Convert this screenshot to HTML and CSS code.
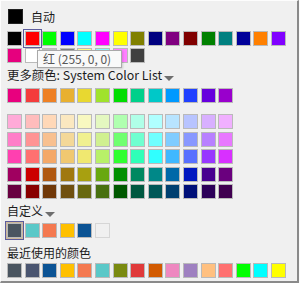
FILE: index.html
```html
<!DOCTYPE html>
<html lang="zh-CN">
<head>
    <meta charset="UTF-8">
    <title>颜色选择</title>
    <link rel="stylesheet" href="styles.css">
</head>
<body>
    <div class="picker">
        <div class="auto">
            <span class="swatch auto-swatch"></span>
            <span class="auto-text">自动</span>
        </div>
        <div class="grid basic" id="basic"></div>
        <div class="label label-more">更多颜色: System Color List<span class="caret"></span></div>
        <div class="grid standard" id="standard"></div>
        <div class="grid tints" id="tints"></div>
        <div class="label label-custom">自定义<span class="caret"></span></div>
        <div class="grid custom" id="custom"></div>
        <div class="label label-recent">最近使用的颜色</div>
        <div class="grid recent" id="recent"></div>

        <div class="tooltip">红 (255, 0, 0)</div>
    </div>

    <script>
        var basic = ['#000000', '#ff0000', '#00ff00', '#0000ff', '#00ffff', '#ff00ff', '#ffff00', '#808000',
                     '#000080', '#800080', '#800000', '#008000', '#008080', '#00009a', '#ff8000', '#8000ff',
                     '#e6007e', '#ffffff', '#c0c0c0', '#808080', '#ffff80', '#80ffff', '#ff80ff', '#404040'];

        var standard = ['#e8007e', '#f43c3c', '#ee8024', '#e8b030', '#e8d830', '#a0e22c', '#00dd00',
                        '#00d08a', '#00c8c8', '#0099ff', '#2040ff', '#6600dd', '#9900cc'];

        var tints = [
            '#ffaad8', '#ffbcbc', '#ffd8b8', '#fbe8c0', '#f8f8c0', '#e4f8c0', '#b0ffb0', '#b0ffe8', '#b0ffff', '#b8e4ff', '#b8c4ff', '#d8b0ff', '#f0b0ff',
            '#ff7ec8', '#ff9494', '#f8c090', '#f4d898', '#f0f090', '#d0f090', '#70ff70', '#70ffd0', '#70ffff', '#80ccff', '#8898ff', '#b880ff', '#e878ff',
            '#ff40b0', '#ff7070', '#f4a868', '#f0c870', '#f0e870', '#b8f068', '#30ff30', '#30ffb8', '#30ffff', '#40b8ff', '#5870ff', '#9838ff', '#d830ff',
            '#a00060', '#cc0000', '#b05810', '#a07810', '#a8a010', '#68a810', '#009000', '#008860', '#008888', '#0068a8', '#0018c0', '#480090', '#6a007e',
            '#680040', '#880000', '#703808', '#705010', '#686810', '#487010', '#005800', '#005840', '#005858', '#004070', '#001078', '#2c0058', '#400050'
        ];

        var custom = ['#4a5560', '#5bc8c8', '#f47950', '#ffc000', '#0b5394', '#f0f0f0'];

        var recent = ['#4a5560', '#4a5570', '#0b5394', '#ffc000', '#f47950', '#5bc8c8', '#7a8a10', '#e03a3a',
                      '#d25a00', '#ee88c0', '#9e80c0', '#ffc080', '#ff7070', '#00ff00', '#00ffff', '#ffff00'];

        function fill(id, colors, selected) {
            var box = document.getElementById(id);
            for (var i = 0; i < colors.length; i++) {
                var cell = document.createElement('span');
                cell.className = 'swatch';
                if (i === selected) {
                    cell.className += ' selected';
                }
                if (colors[i] === '#f0f0f0') {
                    cell.className += ' empty';
                }
                cell.style.background = colors[i];
                box.appendChild(cell);
            }
        }

        fill('basic', basic, 1);
        fill('standard', standard, -1);
        fill('tints', tints, -1);
        fill('custom', custom, 0);
        fill('recent', recent, -1);
    </script>
</body>
</html>
```

FILE: styles.css
```css
body {
    margin: 0;
    background: #fbfbfb;
    font-family: "Noto Sans CJK SC", "Noto Sans", sans-serif;
    font-size: 12px;
    color: #1c1c1c;
}
.picker {
    position: relative;
    width: 290px;
    height: 272px;
    padding: 8px 0 0 6px;
    background: #f0f0f0;
    border-top: 1px solid #fdfdfd;
    border-left: 1px solid #fdfdfd;
    border-right: 2px solid #8a8a8a;
    border-bottom: 2px solid #8a8a8a;
}
.auto {
    display: flex;
    align-items: center;
    height: 15px;
    margin-left: 1px;
}
.auto-text {
    margin-left: 8px;
    line-height: 15px;
}
.grid {
    display: grid;
    grid-template-columns: repeat(16, 15px);
    gap: 2.6px;
}
.standard,
.tints {
    grid-template-columns: repeat(13, 15px);
}
.basic {
    margin-top: 6.5px;
    row-gap: 2.5px;
}
.swatch {
    display: block;
    width: 15px;
    height: 15px;
    box-sizing: border-box;
    border: 1px solid #bababa;
}
.auto-swatch {
    background: #000;
    border-color: #222;
}
.swatch.selected {
    outline: 1px solid #5c5c9c;
    outline-offset: 1px;
}
.custom .swatch.selected {
    box-shadow: 0 0 0 1px #cdb899;
}
.swatch.empty {
    border-color: #d6d6d6;
}
.label {
    height: 14px;
    line-height: 14px;
    white-space: nowrap;
}
.label-more {
    font-size: 12.4px;
    margin: 5px 0 6px;
}
.label-custom {
    margin: 5px 0 4.5px;
}
.label-recent {
    margin: 8px 0 3px;
}
.caret {
    display: inline-block;
    width: 0;
    height: 0;
    margin-left: 2px;
    vertical-align: -1px;
    border-left: 5px solid transparent;
    border-right: 5px solid transparent;
    border-top: 5px solid #6e6e6e;
}
.tints {
    margin-top: 11px;
}
.tooltip {
    position: absolute;
    left: 36px;
    top: 49px;
    width: 78px;
    height: 16px;
    line-height: 16px;
    padding-left: 5px;
    background: #f9f9f9;
    border: 1px solid #a9a9a9;
    box-shadow: 1px 1px 2px rgba(0, 0, 0, 0.15);
    color: #575757;
}
```
